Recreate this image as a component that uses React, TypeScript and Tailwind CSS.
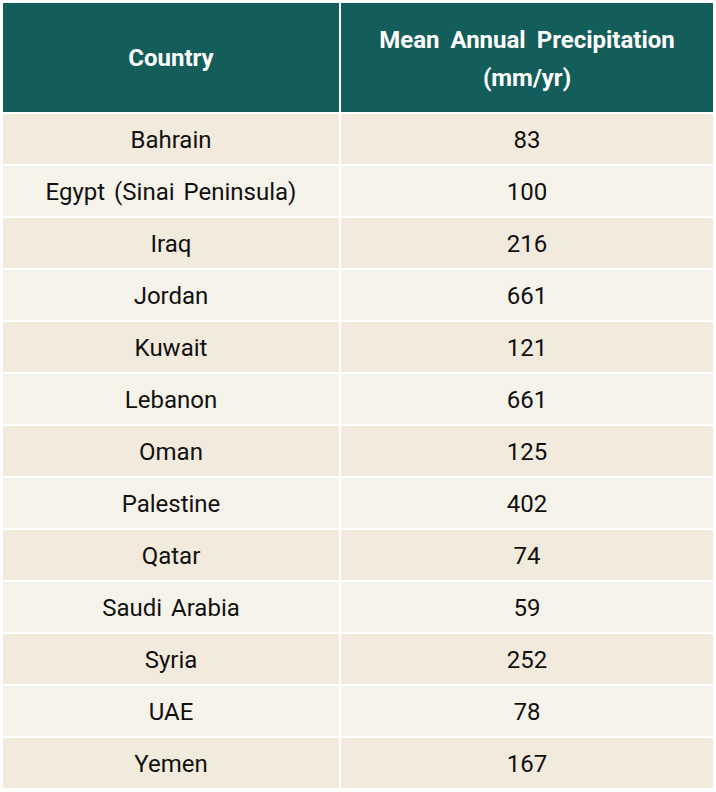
const rows: [string, string][] = [
  ["Bahrain", "83"],
  ["Egypt (Sinai Peninsula)", "100"],
  ["Iraq", "216"],
  ["Jordan", "661"],
  ["Kuwait", "121"],
  ["Lebanon", "661"],
  ["Oman", "125"],
  ["Palestine", "402"],
  ["Qatar", "74"],
  ["Saudi Arabia", "59"],
  ["Syria", "252"],
  ["UAE", "78"],
  ["Yemen", "167"],
];

export default function App() {
  return (
    <div className="min-h-screen bg-white p-[3px] font-['Roboto',sans-serif]">
      <div className="grid grid-cols-[336px_372px] gap-[2px] [word-spacing:3px]">
        <div className="flex h-[109px] items-center justify-center bg-[#135e5a] text-[24px] font-bold text-white">
          Country
        </div>
        <div className="flex h-[109px] items-center justify-center bg-[#135e5a] pt-[2px] text-center text-[24px] font-bold leading-[38px] text-white [word-spacing:5px]">
          Mean Annual Precipitation
          <br />
          (mm/yr)
        </div>
        {rows.map(([country, mm], i) => {
          const bg = i % 2 === 0 ? "bg-[#f1eadd]" : "bg-[#f6f3eb]";
          return [
            <div
              key={country}
              className={`flex h-[50px] items-center justify-center pt-[2px] text-[24px] text-[#111111] ${bg}`}
            >
              {country}
            </div>,
            <div
              key={country + "-v"}
              className={`flex h-[50px] items-center justify-center pt-[2px] text-[24px] text-[#111111] ${bg}`}
            >
              {mm}
            </div>,
          ];
        })}
      </div>
    </div>
  );
}
